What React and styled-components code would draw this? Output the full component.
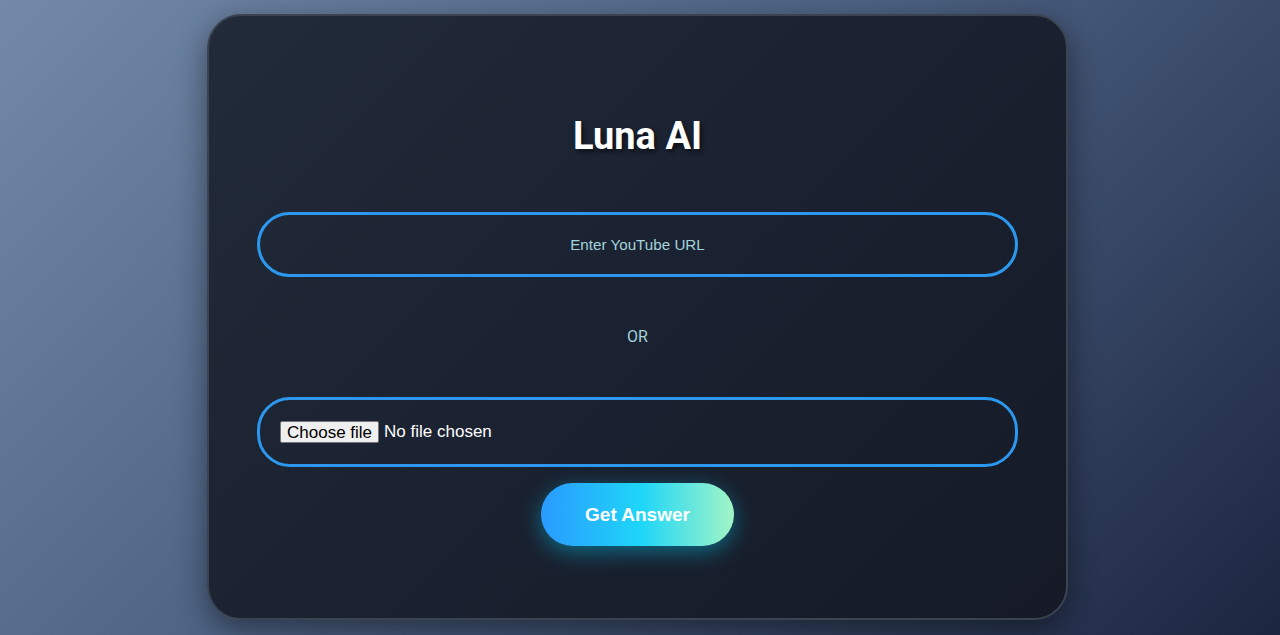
import React, { useState } from "react";
import styled, { createGlobalStyle } from "styled-components";

const Global = createGlobalStyle`
  html, body {
    margin: 0;
    padding: 0;
    height: 100%;
  }
  body {
    background: linear-gradient(135deg, #7389a9 0%, #4d6384 45%, #1c2540 100%);
    font-family: "Roboto", "Liberation Sans", sans-serif;
    overflow: hidden;
  }
  #root {
    min-height: 100%;
  }
`;

const Page = styled.div`
  width: 1280px;
  height: 635px;
  display: flex;
  justify-content: center;
  align-items: flex-start;
  padding-top: 14px;
  box-sizing: border-box;
`;

const Card = styled.div`
  width: 861px;
  margin-left: -5px;
  box-sizing: border-box;
  padding: 101px 48px 72px;
  border: 2px solid #3b4350;
  border-radius: 34px;
  background: linear-gradient(135deg, #222b39 0%, #1a2130 50%, #151a26 100%);
  box-shadow: 0 10px 30px rgba(0, 0, 0, 0.45);
  display: flex;
  flex-direction: column;
  align-items: stretch;
`;

const Title = styled.h1`
  margin: 0;
  font-family: "Roboto", sans-serif;
  font-weight: 700;
  font-size: 38px;
  line-height: 1;
  color: #ffffff;
  text-align: center;
  text-shadow: 2px 3px 5px rgba(0, 0, 0, 0.6);
`;

const UrlInput = styled.input`
  margin-top: 57px;
  height: 65px;
  box-sizing: border-box;
  border: 3px solid #2b98ee;
  border-radius: 33px;
  background: transparent;
  color: #ffffff;
  font-family: "Liberation Sans", Arial, sans-serif;
  font-size: 15.2px;
  text-align: center;
  outline: none;
  &::placeholder {
    color: #a3d2dc;
  }
`;

const Divider = styled.div`
  margin: 52px 0;
  font-family: "Roboto", sans-serif;
  font-size: 16px;
  line-height: 1;
  color: #a3d2dc;
  text-align: center;
`;

const FileBox = styled.label`
  height: 70px;
  box-sizing: border-box;
  border: 3px solid #2b98ee;
  border-radius: 33px;
  display: flex;
  align-items: center;
  gap: 5px;
  padding-left: 20px;
  font-family: "Liberation Sans", Arial, sans-serif;
  font-size: 17px;
  color: #ffffff;
  cursor: pointer;
`;

const HiddenFile = styled.input`
  display: none;
`;

const FileButton = styled.span`
  display: inline-flex;
  align-items: center;
  height: 22px;
  box-sizing: border-box;
  padding: 0 6px;
  background: #efefef;
  color: #000000;
  border: 1px solid #767676;
  border-radius: 2px;
  line-height: 1;
`;

const FileName = styled.span`
  color: #ffffff;
`;

const SubmitButton = styled.button`
  align-self: center;
  margin-top: 16px;
  width: 193px;
  height: 63px;
  border: none;
  border-radius: 32px;
  background: linear-gradient(90deg, #2a9aff 0%, #1ed6f8 52%, #a2f5c6 100%);
  box-shadow: 0 6px 22px rgba(0, 200, 240, 0.45);
  color: #ffffff;
  font-family: "Liberation Sans", Arial, sans-serif;
  font-weight: 700;
  font-size: 19px;
  cursor: pointer;
`;

export default function App() {
  const [fileName, setFileName] = useState("");
  return (
    <>
      <Global />
      <Page>
        <Card>
          <Title>Luna AI</Title>
          <UrlInput type="text" placeholder="Enter YouTube URL" />
          <Divider>OR</Divider>
          <FileBox>
            <HiddenFile
              type="file"
              onChange={(e) => setFileName(e.target.files?.[0]?.name || "")}
            />
            <FileButton>Choose file</FileButton>
            <FileName>{fileName || "No file chosen"}</FileName>
          </FileBox>
          <SubmitButton>Get Answer</SubmitButton>
        </Card>
      </Page>
    </>
  );
}
